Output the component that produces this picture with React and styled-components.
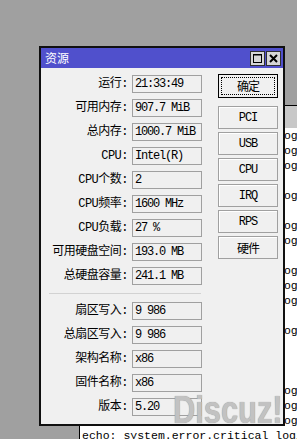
import React from "react";
import styled, { createGlobalStyle } from "styled-components";

const GlobalStyle = createGlobalStyle`
  html, body {
    margin: 0;
    padding: 0;
    background: #a0a0a0;
  }
  body {
    font-family: "Noto Sans CJK SC", sans-serif;
  }
`;

const Desktop = styled.div`
  position: relative;
  width: 297px;
  height: 439px;
  overflow: hidden;
  background: #a0a0a0;
`;

// log window sitting behind the dialog
const LogWindow = styled.div`
  position: absolute;
  left: 79px;
  top: 105px;
  width: 260px;
  height: 360px;
  background: #fff;
  border: 1px solid #000;
  font-family: "Liberation Mono", monospace;
  font-size: 11.5px;
  color: #000;
`;

const LogHeader = styled.div`
  height: 22px;
  background: #c8c8c8;
`;

const LogBody = styled.div`
  display: grid;
  grid-template-columns: 195px 1fr;
  grid-auto-rows: 15px;
  padding-left: 2px;
`;

const LogLine = styled.div`
  grid-column: ${({ $wide }) => ($wide ? "1 / -1" : "2")};
  line-height: 15px;
  white-space: nowrap;
`;

const Dialog = styled.div`
  position: absolute;
  left: 39px;
  top: 46px;
  width: 246px;
  height: 380px;
  box-sizing: border-box;
  border: 2px solid #101010;
  background: #f0f0f0;
  display: flex;
  flex-direction: column;
`;

const TitleBar = styled.div`
  height: 20px;
  background: #5050cc;
  display: flex;
  align-items: center;
  padding: 0 2px 0 4px;
`;

const Title = styled.span`
  color: #fff;
  font-size: 12px;
  line-height: 20px;
`;

const TitleButtons = styled.div`
  margin-left: auto;
  display: flex;
  gap: 1px;
`;

const TitleButton = styled.div`
  width: 15px;
  height: 15px;
  box-sizing: border-box;
  border: 1px solid #303030;
  background: #d6d6d6;
  display: flex;
  align-items: center;
  justify-content: center;
`;

const Body = styled.div`
  flex: 1;
  display: flex;
  padding: 6px 5px 0 0;
`;

const Form = styled.div`
  display: grid;
  grid-template-columns: 87px 70px;
  column-gap: 4px;
  row-gap: 6px;
  margin-top: 1px;
  align-content: start;
`;

const Label = styled.div`
  text-align: right;
  font-family: "Liberation Mono", "Noto Sans CJK SC", monospace;
  font-size: 12px;
  line-height: 18px;
  letter-spacing: -0.5px;
  white-space: nowrap;
  color: #000;
`;

const ValueBox = styled.div`
  height: 18px;
  box-sizing: border-box;
  border: 1px solid #a0a0a0;
  padding: 0 2px;
  font-family: "Liberation Mono", "Noto Sans CJK SC", monospace;
  font-size: 12px;
  line-height: 16px;
  letter-spacing: -1.2px;
  white-space: nowrap;
  overflow: hidden;
  color: #000;
`;

const Separator = styled.div`
  grid-column: 1 / -1;
  height: 1px;
  background: #d2d2d2;
  margin: 2px 1px 2px 8px;
`;

const ButtonColumn = styled.div`
  margin-left: 16px;
  width: 60px;
  display: flex;
  flex-direction: column;
  gap: 3px;
`;

const Button = styled.button`
  height: ${({ $default }) => ($default ? "24px" : "23px")};
  margin-bottom: ${({ $default }) => ($default ? "5px" : "0")};
  padding: 0;
  box-sizing: border-box;
  border: 1px solid ${({ $default }) => ($default ? "#000" : "#a0a0a0")};
  background: #f0f0f0;
  box-shadow: ${({ $default }) => ($default ? "none" : "inset 1px 1px #fff")};
  outline: ${({ $default }) => ($default ? "1px dotted #000" : "none")};
  outline-offset: -4px;
  font-family: "Liberation Mono", "Noto Sans CJK SC", monospace;
  font-size: 12px;
  letter-spacing: -1px;
  color: #000;
`;

const Watermark = styled.div`
  position: absolute;
  left: 173px;
  top: 390px;
  font-family: "Liberation Sans", sans-serif;
  font-weight: bold;
  font-size: 39px;
  line-height: 1;
  color: #c2c2c2;
  text-shadow: 0 0 1px #8a8a8a;
  transform: scaleX(0.79);
  transform-origin: left top;
  white-space: nowrap;
`;

const rows1 = [
  ["运行:", "21:33:49"],
  ["可用内存:", "907.7 MiB"],
  ["总内存:", "1000.7 MiB"],
  ["CPU:", "Intel(R)"],
  ["CPU个数:", "2"],
  ["CPU频率:", "1600 MHz"],
  ["CPU负载:", "27 %"],
  ["可用硬盘空间:", "193.0 MB"],
  ["总硬盘容量:", "241.1 MB"],
];

const rows2 = [
  ["扇区写入:", "9 986"],
  ["总扇区写入:", "9 986"],
  ["架构名称:", "x86"],
  ["固件名称:", "x86"],
  ["版本:", "5.20"],
];

const buttons = ["PCI", "USB", "CPU", "IRQ", "RPS", "硬件"];

// which log rows show text to the right of the dialog
const logRows = [1, 1, 1, 0, 1, 0, 1, 1, 0, 1, 1, 1, 0, 1, 0, 0, 0, 1, 1, 1];

function Field({ label, value }) {
  return (
    <>
      <Label>{label}</Label>
      <ValueBox>{value}</ValueBox>
    </>
  );
}

export default function App() {
  return (
    <>
      <GlobalStyle />
      <Desktop>
        <LogWindow>
          <LogHeader />
          <LogBody>
            {logRows.map((on, i) => (
              <LogLine key={i}>{on ? "log" : "\u00a0"}</LogLine>
            ))}
            <LogLine $wide>echo: system.error.critical login failure</LogLine>
          </LogBody>
        </LogWindow>

        <Dialog>
          <TitleBar>
            <Title>资源</Title>
            <TitleButtons>
              <TitleButton>
                <svg width="11" height="11" viewBox="0 0 11 11">
                  <rect x="1.5" y="1.5" width="8" height="8" fill="none" stroke="#000" strokeWidth="1" />
                  <line x1="1" y1="2" x2="10" y2="2" stroke="#000" strokeWidth="1" />
                </svg>
              </TitleButton>
              <TitleButton>
                <svg width="11" height="11" viewBox="0 0 11 11">
                  <path d="M2 2 L9 9 M9 2 L2 9" stroke="#000" strokeWidth="2" />
                </svg>
              </TitleButton>
            </TitleButtons>
          </TitleBar>
          <Body>
            <Form>
              {rows1.map(([l, v]) => (
                <Field key={l} label={l} value={v} />
              ))}
              <Separator />
              {rows2.map(([l, v]) => (
                <Field key={l} label={l} value={v} />
              ))}
            </Form>
            <ButtonColumn>
              <Button $default>确定</Button>
              {buttons.map((b) => (
                <Button key={b}>{b}</Button>
              ))}
            </ButtonColumn>
          </Body>
        </Dialog>

        <Watermark>Discuz!</Watermark>
      </Desktop>
    </>
  );
}
